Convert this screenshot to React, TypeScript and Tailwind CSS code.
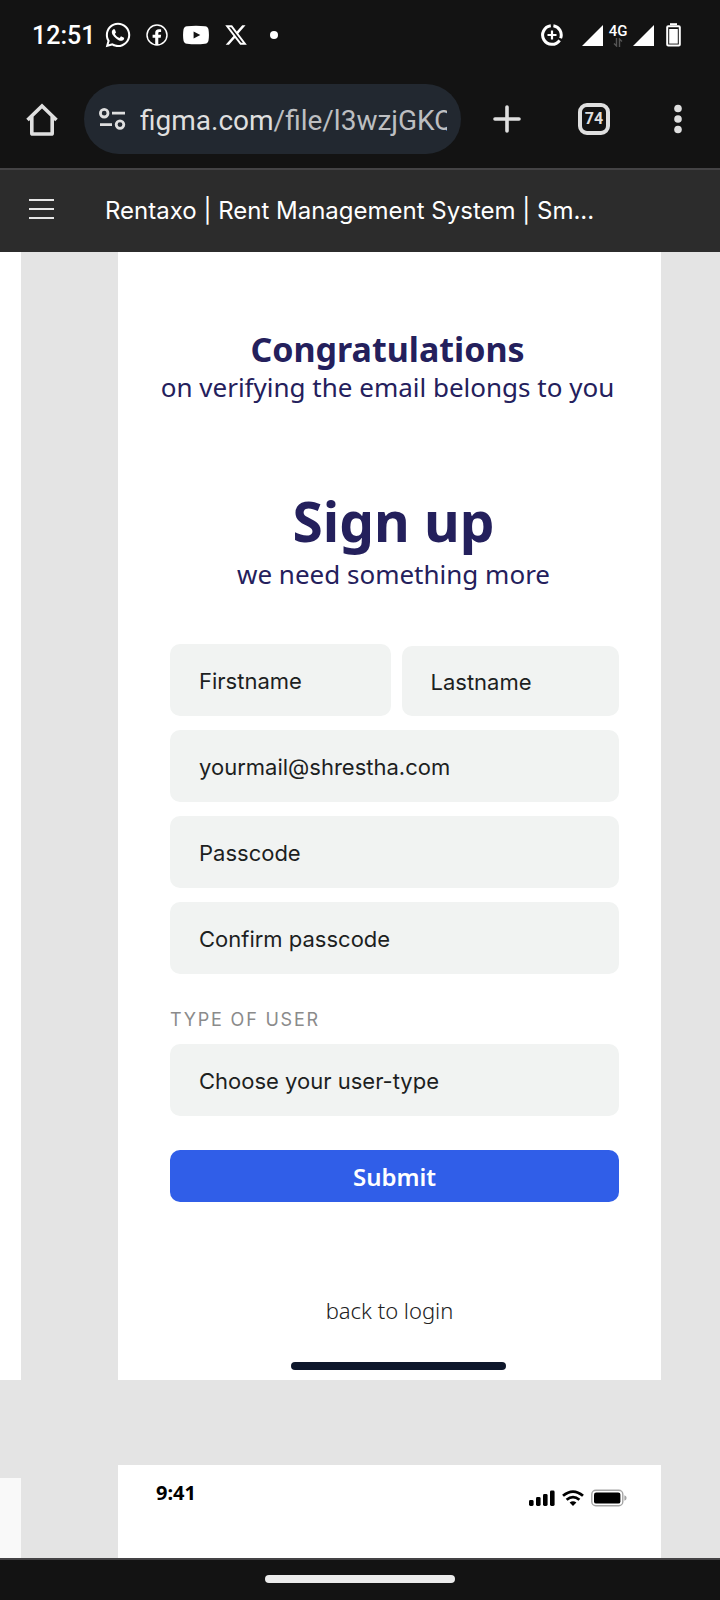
import type { InputHTMLAttributes } from "react";
import { FaWhatsapp, FaXTwitter } from "react-icons/fa6";

const fieldClass =
  "block w-full rounded-[10px] bg-[#f1f3f2] pl-[29px] pr-4 pt-0.5 font-['Inter',sans-serif] text-[22px] text-[#1d1f1f] placeholder:text-[#1d1f1f] placeholder:opacity-100";

function Field({ label, tall = true, ...rest }: { label: string; tall?: boolean } & InputHTMLAttributes<HTMLInputElement>) {
  return (
    <input
      aria-label={label}
      placeholder={label}
      className={`${fieldClass} ${tall ? "h-[72px]" : "h-[70px]"}`}
      {...rest}
    />
  );
}

function FacebookIcon() {
  return (
    <svg width="22" height="22" viewBox="0 0 22 22" fill="none">
      <circle cx="11" cy="11" r="10" stroke="#fff" strokeWidth="1.5" />
      <path d="M9.2 21V13.8H6.6V10.8H9.2V9C9.2 6.6 10.6 5.3 12.8 5.3H15.1V8H13.6C12.7 8 12.3 8.5 12.3 9.3V10.8H15.1L14.7 13.8H12.3V21Z" fill="#fff" />
    </svg>
  );
}

function YoutubeIcon() {
  return (
    <svg width="26" height="20" viewBox="0 0 26 20">
      <path fillRule="evenodd" fill="#fff" d="M4 1.2Q13 .2 22 1.2Q25 1.5 25.5 4.5Q26.4 10 25.5 15.5Q25 18.5 22 18.8Q13 19.8 4 18.8Q1 18.5.5 15.5Q-.4 10 .5 4.5Q1 1.5 4 1.2ZM10.6 6.4V13.6L17.3 10Z" />
    </svg>
  );
}

function DataSaverIcon() {
  return (
    <svg width="22" height="24" viewBox="0 0 22 24" fill="none" stroke="#fff">
      <path d="M9.8 2.8A9.3 9.3 0 1 0 18.6 17.3" strokeWidth="3" />
      <path d="M12.4 2.8A9.3 9.3 0 0 1 19.6 15.3" strokeWidth="3" />
      <path d="M11 7.5V16.5M6.5 12H15.5" strokeWidth="2.2" />
    </svg>
  );
}

function SignalIcon() {
  return (
    <svg width="21" height="21" viewBox="0 0 21 21">
      <path d="M21 0V21H0Z" fill="#fff" />
    </svg>
  );
}

function StatusBar() {
  return (
    <div className="flex h-[70px] items-center justify-between pl-8 pr-[39px] font-['Roboto',sans-serif] text-white">
      <div className="flex items-center">
        <span className="w-[60px] pt-0.5 text-[25px] font-medium">12:51</span>
        <FaWhatsapp className="ml-3 size-7" />
        <span className="ml-3.5"><FacebookIcon /></span>
        <span className="ml-[15px]"><YoutubeIcon /></span>
        <FaXTwitter className="ml-[15px] size-6" />
        <span className="ml-[22px] size-2 rounded-full bg-white" />
      </div>
      <div className="flex items-center">
        <DataSaverIcon />
        <span className="ml-[19px]"><SignalIcon /></span>
        <span className="ml-[5px] flex w-5 flex-col items-center">
          <span className="text-[15px] font-medium leading-[14px]">4G</span>
          <svg width="10" height="9" viewBox="0 0 10 9" fill="none" stroke="#555" strokeWidth="1.4">
            <path d="M3.5 0V8L1 5.5M6.5 9V1L9 3.5" />
          </svg>
        </span>
        <span className="ml-[5px]"><SignalIcon /></span>
        <svg className="ml-3" width="15" height="24" viewBox="0 0 15 24" fill="none">
          <path d="M4 1.2H11" stroke="#fff" strokeWidth="2" />
          <rect x="1.2" y="3.2" width="12.6" height="19.4" rx="1" stroke="#fff" strokeWidth="2" />
          <rect x="3.2" y="6" width="8.6" height="14.6" fill="#fff" />
        </svg>
      </div>
    </div>
  );
}

function Toolbar() {
  return (
    <div className="flex h-[100px] items-center border-b-2 border-[#444345] pl-[25px] pr-[34px] font-['Roboto',sans-serif] text-[#dfdfdf]">
      <button aria-label="Home">
        <svg width="34" height="34" viewBox="0 0 34 34" fill="none" stroke="#dfdfdf" strokeWidth="3.6">
          <path d="M2.5 18L17 4L31.5 18" />
          <path d="M6.8 14.5V31.2Q6.8 32 7.6 32H26.4Q27.2 32 27.2 31.2V14.5" />
        </svg>
      </button>
      <div className="ml-[25px] flex h-[70px] min-w-0 flex-1 items-center rounded-full bg-[#222830] pl-[15px] pr-[14px]">
        <svg className="shrink-0" width="27" height="24" viewBox="0 0 27 24" fill="none" stroke="#dfdfdf" strokeWidth="2.8">
          <circle cx="5.2" cy="6.2" r="3.8" />
          <path d="M13 6.2H26M1 17.6H13" />
          <circle cx="21" cy="17.6" r="3.8" />
        </svg>
        <div className="ml-[14px] min-w-0 flex-1 overflow-hidden whitespace-nowrap pt-1 text-[28px]">
          figma.com<span className="text-[#bdbfc1]">/file/l3wzjGKQ</span>
        </div>
      </div>
      <button aria-label="New tab" className="ml-8">
        <svg width="28" height="28" viewBox="0 0 28 28" stroke="#dfdfdf" strokeWidth="3.6" strokeLinecap="round">
          <path d="M14 2V26M2 14H26" />
        </svg>
      </button>
      <button aria-label="Open tabs" className="ml-[57px] flex size-8 items-center justify-center rounded-[9px] border-4 border-[#dfdfdf] text-base font-bold leading-none">
        74
      </button>
      <button aria-label="More options" className="ml-[60px]">
        <svg width="16" height="30" viewBox="0 0 16 30" fill="#dfdfdf">
          <circle cx="8" cy="4.5" r="3.8" />
          <circle cx="8" cy="15" r="3.8" />
          <circle cx="8" cy="25.5" r="3.8" />
        </svg>
      </button>
    </div>
  );
}

function SignupFrame() {
  return (
    <section className="flex h-[1128px] flex-col bg-white pt-[77px] font-['Noto_Sans',sans-serif] text-[#24205c]">
      <div className="pr-1 text-center">
        <h2 className="text-[34px] font-bold leading-10">Congratulations</h2>
        <p className="text-[26px] leading-9">on verifying the email belongs to you</p>
      </div>
      <div className="mt-[81px] pl-2 text-center">
        <h1 className="text-[55px] font-bold leading-[70px]">Sign up</h1>
        <p className="text-[26px] leading-9">we need something more</p>
      </div>
      <form className="ml-[52px] mr-[42px] mt-[52px]" onSubmit={(e) => e.preventDefault()}>
        <div className="grid grid-cols-[220fr_217fr] items-end gap-[11px]">
          <Field label="Firstname" />
          <Field label="Lastname" tall={false} />
        </div>
        <div className="mt-3.5 flex flex-col gap-3.5">
          <Field label="yourmail@shrestha.com" type="email" />
          <Field label="Passcode" type="password" />
          <Field label="Confirm passcode" type="password" />
        </div>
        <label htmlFor="user-type" className="mt-8 block font-['Inter',sans-serif] text-lg leading-7 tracking-widest text-[#8b8b8b]">
          TYPE OF USER
        </label>
        <select id="user-type" className={`${fieldClass} mt-2.5 h-[72px] appearance-none`}>
          <option>Choose your user-type</option>
        </select>
        <button className="mt-[34px] h-[52px] w-full rounded-[10px] bg-[#305ee8] pt-0.5 text-2xl font-semibold text-white">Submit</button>
      </form>
      <a href="#login" className="mx-auto mt-[92px] block text-[22px] font-light leading-8 text-[#222]">back to login</a>
      <div className="mb-2.5 mt-auto flex justify-center pl-[18px]">
        <div className="h-2 w-[215px] rounded-full bg-[#0e172b]" />
      </div>
    </section>
  );
}

function NextFrame() {
  return (
    <section className="flex flex-1 items-start justify-between bg-white pl-[38px] pr-[34px] pt-4">
      <span className="font-['Noto_Sans',sans-serif] text-xl font-bold leading-6 text-black">9:41</span>
      <div className="mt-2 flex items-center gap-[7px]">
        <svg width="26" height="17" viewBox="0 0 26 17">
          <rect x="0" y="10" width="4.6" height="6" rx="1.4" />
          <rect x="7" y="7" width="4.6" height="9" rx="1.4" />
          <rect x="14" y="4" width="4.6" height="12" rx="1.4" />
          <rect x="21" y="0.5" width="4.6" height="15.5" rx="1.4" />
        </svg>
        <svg width="22" height="17" viewBox="0 0 22 17" fill="none" stroke="#000" strokeWidth="2.8">
          <path d="M1 5.8Q11-2.6 21 5.8" />
          <path d="M4.6 9.8Q11 4.4 17.4 9.8" />
          <path d="M7.6 12.6Q11 10 14.4 12.6L11 16Z" fill="#000" stroke="none" />
        </svg>
        <svg width="36" height="18" viewBox="0 0 36 18" fill="none">
          <rect x="0.8" y="1.3" width="31" height="15.4" rx="4" stroke="#a5a5a5" strokeWidth="1.4" />
          <rect x="3" y="3.6" width="26.4" height="11" rx="2.2" fill="#000" />
          <path d="M33.4 6.2Q35.6 7 35.6 9Q35.6 11 33.4 11.8Z" fill="#a5a5a5" />
        </svg>
      </div>
    </section>
  );
}

export default function App() {
  return (
    <div className="flex min-h-screen flex-col bg-[#131313]">
      <StatusBar />
      <Toolbar />
      <header className="flex h-[82px] items-center bg-[#2c2c2c] pl-[29px] text-white">
        <button aria-label="Menu">
          <svg width="25" height="24" viewBox="0 0 25 24" stroke="#e6e6e6" strokeWidth="2">
            <path d="M0 1H25M0 10H25M0 19H25" />
          </svg>
        </button>
        <span className="ml-[51px] truncate font-['Inter',sans-serif] text-2xl">Rentaxo | Rent Management System | Sm...</span>
      </header>
      <main className="flex flex-1 gap-[97px] bg-[#e4e4e4] pr-[59px]">
        <div className="flex w-[21px] shrink-0 flex-col">
          <div className="h-[1128px] bg-white" />
          <div className="mt-[98px] flex-1 bg-[#f9f9f9]" />
        </div>
        <div className="flex min-w-0 flex-1 flex-col gap-[85px]">
          <SignupFrame />
          <NextFrame />
        </div>
      </main>
      <footer className="flex h-[42px] items-center justify-center border-t-2 border-[#444345] pb-0.5">
        <div className="h-2 w-[190px] rounded-full bg-[#ebebeb]" />
      </footer>
    </div>
  );
}
